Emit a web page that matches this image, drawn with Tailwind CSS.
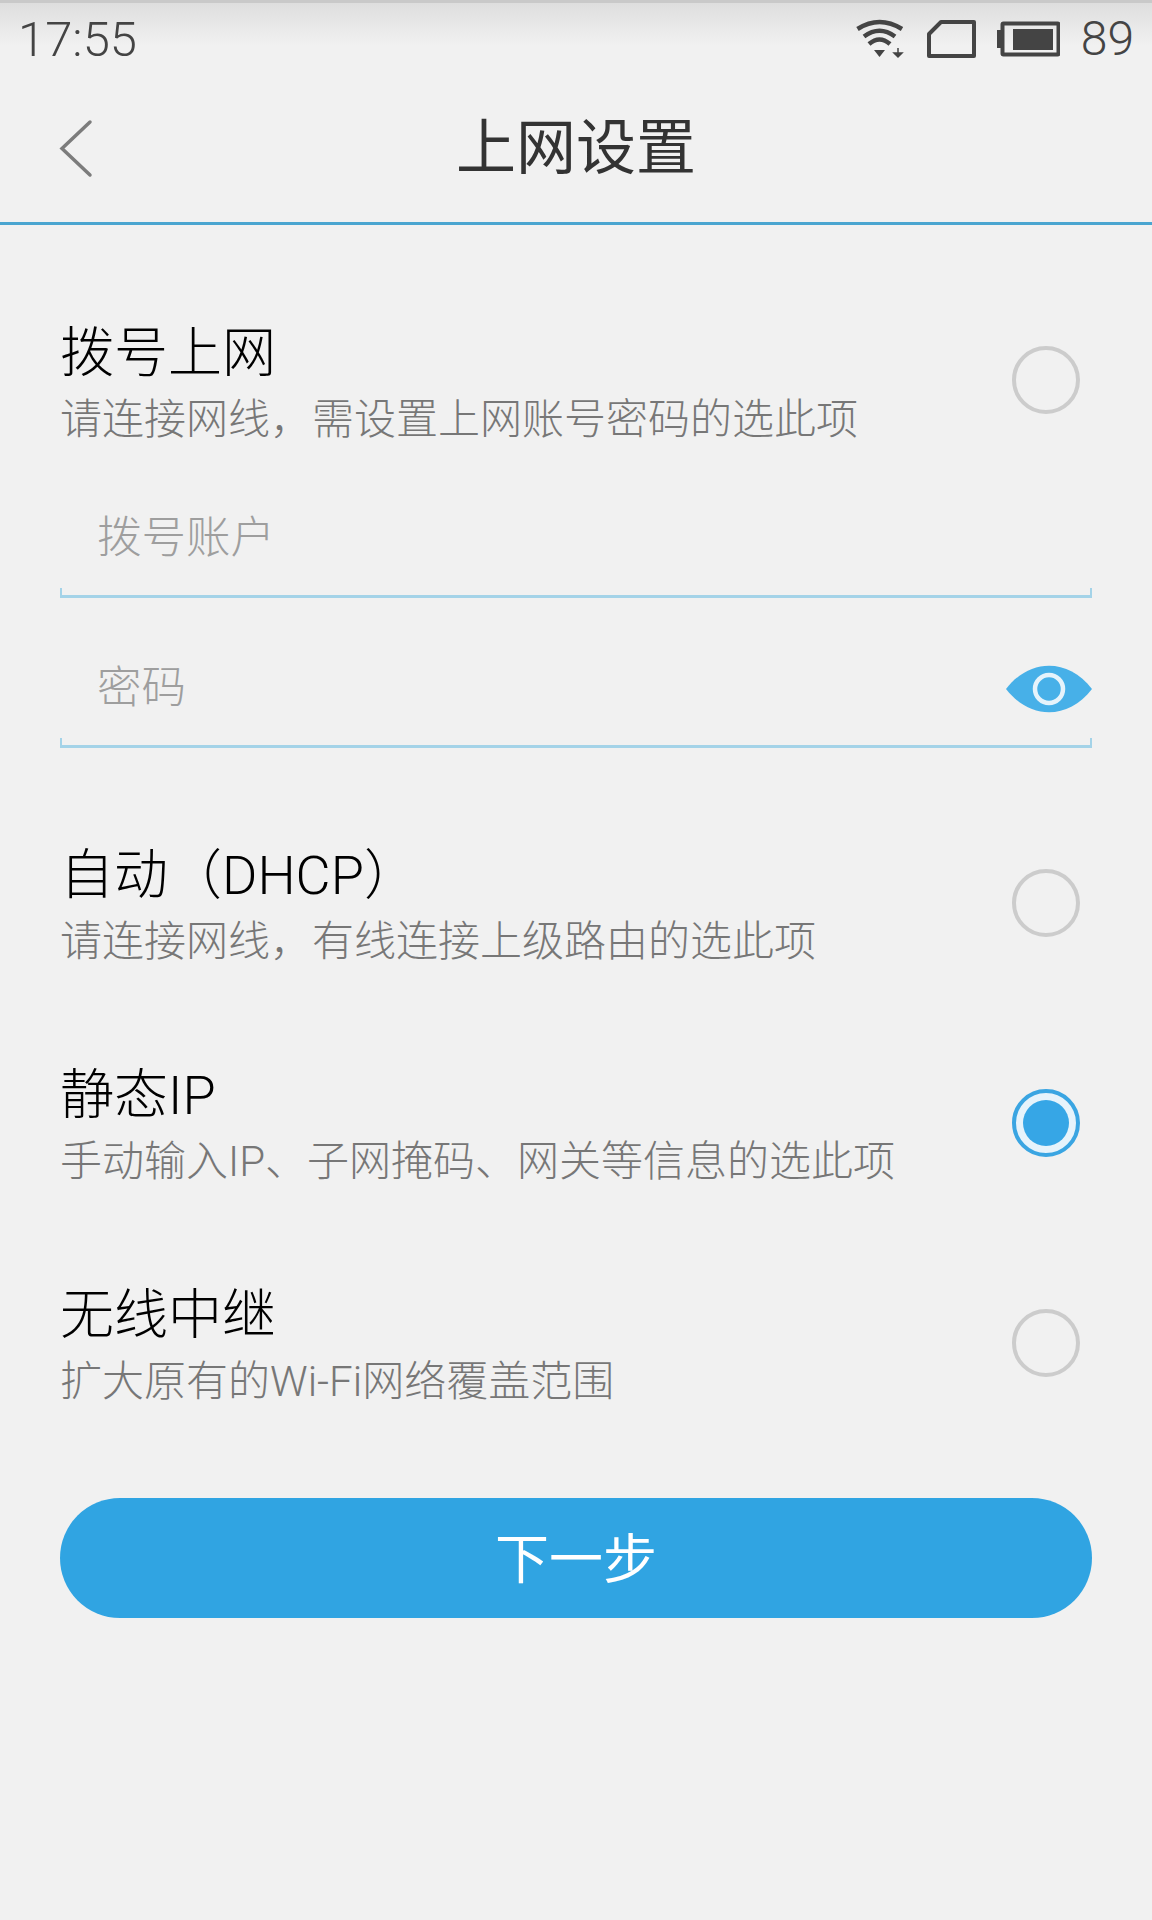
<!DOCTYPE html>
<html lang="zh-CN">
<head>
  <meta charset="UTF-8">
  <meta name="viewport" content="width=device-width, initial-scale=1.0">
  <title>上网设置</title>
  <script src="https://cdn.jsdelivr.net/npm/@tailwindcss/browser@4"></script>
</head>
<body class="bg-[#f1f1f1] font-['Roboto','Noto_Sans_CJK_SC',sans-serif]">
  <div class="w-[1152px] h-[1920px] overflow-hidden">
    <!-- status bar -->
    <div class="h-[74px] flex items-center justify-between pl-[18px] pr-[18px] pt-[1px] border-t-[3px] border-[#c9c9c9] bg-gradient-to-b from-[#dedede] to-[#f1f1f1] to-60% text-[#444]">
      <span class="text-[49px] font-light leading-none">17:55</span>
      <div class="flex items-center">
        <svg class="w-[48px] h-[40px]" viewBox="0 0 48 40">
          <path d="M1.500 10 Q23.500 -4 46 10 M8 17.500 Q23.500 6 39 17.500 M13 25 Q23.500 16 34 25" fill="none" stroke="#444" stroke-width="4.500"/>
          <path d="M18 31 H29 L23.500 38 Z" fill="#444"/>
          <path d="M42 29 V34 M38 34 H46 L42 38 Z" fill="#444" stroke="#444" stroke-width="1.500"/>
        </svg>
        <svg class="w-[50px] h-[40px] ml-[23px]" viewBox="0 0 50 40">
          <path d="M14 3 H47 V37 H2 V15 Z" fill="none" stroke="#444" stroke-width="4" stroke-linejoin="round"/>
        </svg>
        <svg class="w-[64px] h-[36px] ml-[19px]" viewBox="0 0 64 36">
          <path d="M1 9 H5 V27 H1 Z" fill="#444"/>
          <rect x="6.500" y="2.500" width="56" height="31" rx="1" fill="none" stroke="#444" stroke-width="4"/>
          <rect x="17" y="8" width="40" height="21" fill="#444"/>
        </svg>
        <span class="text-[48px] font-light leading-none ml-[21px] -mt-[1px]">89</span>
      </div>
    </div>

    <!-- header -->
    <div class="relative h-[151px] flex items-center justify-center border-b-[3px] border-[#4aa5d0]">
      <svg class="absolute left-[58px] top-[45px] w-[36px] h-[62px]" viewBox="0 0 36 62">
        <path d="M32 3 L4 29.500 L32 56" fill="none" stroke="#7c7c7c" stroke-width="3.500" stroke-linecap="round"/>
      </svg>
      <h1 class="text-[60px] leading-none text-[#333] mt-[2px]">上网设置</h1>
    </div>

    <main class="px-[60px] pt-[96px] font-light">
      <!-- 拨号上网 -->
      <div class="flex items-center justify-between">
        <div>
          <div class="text-[54px] leading-[66px] text-black">拨号上网</div>
          <div class="text-[42px] leading-[66px] text-[#777]">请连接网线，需设置上网账号密码的选此项</div>
        </div>
        <div class="w-[68px] h-[68px] rounded-full border-[4px] border-[#ccc] mr-[12px] -mt-[14px]"></div>
      </div>

      <div class="mt-[35px]">
        <div class="h-[100px] flex items-center pl-[37px] text-[44.500px] text-[#9e9e9e]">拨号账户</div>
        <div class="h-[10px] border-x-2 border-b-[3px] border-[#a4d3e8]"></div>
      </div>
      <div class="mt-[40px]">
        <div class="h-[100px] flex items-center justify-between pl-[37px] text-[44.500px] text-[#9e9e9e]">
          <span>密码</span>
          <svg class="w-[86px] h-[48px] mt-[2px]" viewBox="0 0 86 48">
            <path d="M0 24 C24 -7 62 -7 86 24 C62 55 24 55 0 24 Z" fill="#47b0e8"/>
            <circle cx="43" cy="24" r="14" fill="none" stroke="#e6f3fb" stroke-width="4.500"/>
          </svg>
        </div>
        <div class="h-[10px] border-x-2 border-b-[3px] border-[#a4d3e8]"></div>
      </div>

      <!-- 自动 -->
      <div class="flex items-center justify-between mt-[95px]">
        <div>
          <div class="text-[54px] leading-[66px] text-black">自动（DHCP）</div>
          <div class="text-[42px] leading-[66px] text-[#777]">请连接网线，有线连接上级路由的选此项</div>
        </div>
        <div class="w-[68px] h-[68px] rounded-full border-[4px] border-[#ccc] mr-[12px] -mt-[13px]"></div>
      </div>

      <!-- 静态IP -->
      <div class="flex items-center justify-between mt-[88px]">
        <div>
          <div class="text-[54px] leading-[66px] text-black">静态IP</div>
          <div class="text-[42px] leading-[66px] text-[#777]">手动输入IP、子网掩码、网关等信息的选此项</div>
        </div>
        <div class="w-[68px] h-[68px] rounded-full border-[4px] border-[#3aa5e2] bg-[#e6f3fb] flex items-center justify-center mr-[12px] -mt-[13px]">
          <div class="w-[46px] h-[46px] rounded-full bg-[#36a6e6]"></div>
        </div>
      </div>

      <!-- 无线中继 -->
      <div class="flex items-center justify-between mt-[88px]">
        <div>
          <div class="text-[54px] leading-[66px] text-black">无线中继</div>
          <div class="text-[42px] leading-[66px] text-[#777]">扩大原有的Wi-Fi网络覆盖范围</div>
        </div>
        <div class="w-[68px] h-[68px] rounded-full border-[4px] border-[#ccc] mr-[12px] -mt-[13px]"></div>
      </div>

      <button class="w-full h-[120px] mt-[83px] pt-[5px] rounded-full bg-[#30a4e2] text-white text-[54px] font-normal">下一步</button>
    </main>
  </div>
</body>
</html>
